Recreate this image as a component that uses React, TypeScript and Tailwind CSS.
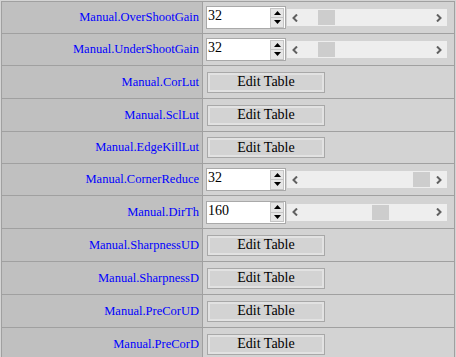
import React from "react";

type Row =
  | { label: string; kind: "num"; value: number; max: number; h: string }
  | { label: string; kind: "table"; h: string };

const rows: Row[] = [
  { label: "Manual.OverShootGain", kind: "num", value: 32, max: 255, h: "h-[32px]" },
  { label: "Manual.UnderShootGain", kind: "num", value: 32, max: 255, h: "h-[32px]" },
  { label: "Manual.CorLut", kind: "table", h: "h-[33px]" },
  { label: "Manual.SclLut", kind: "table", h: "h-[33px]" },
  { label: "Manual.EdgeKillLut", kind: "table", h: "h-[32px]" },
  { label: "Manual.CornerReduce", kind: "num", value: 32, max: 32, h: "h-[32px]" },
  { label: "Manual.DirTh", kind: "num", value: 160, max: 255, h: "h-[33px]" },
  { label: "Manual.SharpnessUD", kind: "table", h: "h-[33px]" },
  { label: "Manual.SharpnessD", kind: "table", h: "h-[33px]" },
  { label: "Manual.PreCorUD", kind: "table", h: "h-[33px]" },
  { label: "Manual.PreCorD", kind: "table", h: "h-[33px]" },
];

function Spinner() {
  return (
    <div className="flex flex-col h-[20px] w-[14px] mr-px">
      <div className="flex-1 flex items-center justify-center bg-[#e6e6e6] border border-[#c4c4c4]">
        <svg width="7" height="4" viewBox="0 0 7 4">
          <path d="M0 4 L3.5 0 L7 4 Z" fill="#000" />
        </svg>
      </div>
      <div className="flex-1 flex items-center justify-center bg-[#e6e6e6] border border-t-0 border-[#c4c4c4]">
        <svg width="7" height="4" viewBox="0 0 7 4">
          <path d="M0 0 L3.5 4 L7 0 Z" fill="#000" />
        </svg>
      </div>
    </div>
  );
}

function NumberField({ value, max }: { value: number; max: number }) {
  const travel = 109;
  const left = 17 + Math.round((value / max) * travel);
  return (
    <div className="flex items-center">
      <div className="flex items-center w-[80px] h-[23px] bg-white border border-[#a9a9a9]">
        <span className="flex-1 pl-[1px] text-[14px] text-black leading-none pb-[3px]">{value}</span>
        <Spinner />
      </div>
      <div className="relative ml-px w-[160px] h-[17px] bg-[#eeeeee] flex items-center justify-between px-[5px]">
        <svg width="6" height="8" viewBox="0 0 6 8">
          <path d="M5 0.5 L1.5 4 L5 7.5" stroke="#606060" strokeWidth="2" fill="none" />
        </svg>
        <div className="absolute top-px w-[17px] h-[15px] bg-[#cdcdcd]" style={{ left }} />
        <svg width="6" height="8" viewBox="0 0 6 8">
          <path d="M1 0.5 L4.5 4 L1 7.5" stroke="#606060" strokeWidth="2" fill="none" />
        </svg>
      </div>
    </div>
  );
}

function EditButton() {
  return (
    <div className="ml-px w-[118px] h-[21px] border border-[#a8a8a8] bg-[#e2e2e2] p-[2px]">
      <div className="h-full bg-[#d3d3d3] flex items-center justify-center text-[14px] text-black leading-none">
        Edit Table
      </div>
    </div>
  );
}

export default function App() {
  return (
    <div className="w-[456px] h-[357px] overflow-hidden bg-[#d4d4d4] pl-px pt-px font-['Liberation_Serif','Times_New_Roman',serif]">
      <div className="w-[454px] border border-b-0 border-[#a0a0a0]">
        {rows.map((r) => (
          <div key={r.label} className={`flex border-b border-[#a0a0a0] ${r.h}`}>
            <div className="w-[201px] shrink-0 bg-[#c0c0c0] flex items-center justify-end pr-[3px] text-[12.5px] text-[#0000ff] border-r border-[#a0a0a0]">
              {r.label}
            </div>
            <div className="flex-1 bg-[#d3d3d3] flex items-center pl-[3px]">
              {r.kind === "num" ? <NumberField value={r.value} max={r.max} /> : <EditButton />}
            </div>
          </div>
        ))}
      </div>
    </div>
  );
}
